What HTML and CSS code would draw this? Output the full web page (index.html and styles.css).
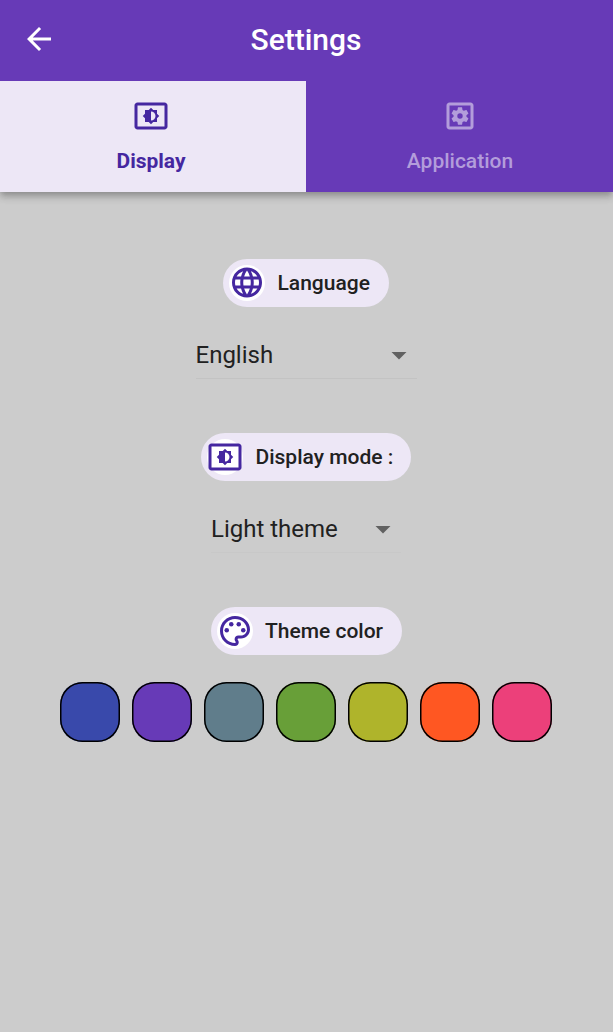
FILE: index.html
```html
<!DOCTYPE html>
<html lang="en">
<head>
<meta charset="utf-8">
<title>Settings</title>
<link rel="stylesheet" href="styles.css">
</head>
<body>
<svg class="defs" aria-hidden="true">
  <symbol id="brightness" viewBox="0 0 24 24"><path d="M21 3H3c-1.1 0-2 .9-2 2v14c0 1.1.9 2 2 2h18c1.1 0 2-.9 2-2V5c0-1.1-.9-2-2-2zm0 16.01H3V4.99h18v14.02zM8 16h2.5l1.5 1.5 1.5-1.5H16v-2.5l1.5-1.5-1.5-1.5V8h-2.5L12 6.5 10.5 8H8v2.5L6.5 12 8 13.5V16zm4-7c1.66 0 3 1.34 3 3s-1.34 3-3 3V9z"/></symbol>
</svg>
<header class="header">
  <div class="appbar">
    <button class="back" aria-label="Back"><svg class="icon" viewBox="0 0 24 24"><path d="M20 11H7.83l5.59-5.59L12 4l-8 8 8 8 1.41-1.41L7.83 13H20v-2z"/></svg></button>
    <h1 class="title">Settings</h1>
  </div>
  <nav class="tabs">
    <a class="tab tab-active"><svg class="icon"><use href="#brightness"/></svg><span class="tab-label label-display">Display</span></a>
    <a class="tab"><svg class="icon" viewBox="0 0 24 24"><path d="M19 3H5c-1.11 0-2 .9-2 2v14c0 1.1.89 2 2 2h14c1.11 0 2-.9 2-2V5c0-1.1-.89-2-2-2zm0 16H5V5h14v14z"/><path transform="translate(12 12) scale(.6) translate(-12 -12)" d="M19.14 12.94c.04-.3.06-.61.06-.94 0-.32-.02-.64-.07-.94l2.03-1.58c.18-.14.23-.41.12-.61l-1.92-3.32c-.12-.22-.37-.29-.59-.22l-2.39.96c-.5-.38-1.03-.7-1.62-.94l-.36-2.54c-.04-.24-.24-.41-.48-.41h-3.84c-.24 0-.43.17-.47.41l-.36 2.54c-.59.24-1.13.57-1.62.94l-2.39-.96c-.22-.08-.47 0-.59.22L2.74 8.87c-.12.21-.08.47.12.61l2.03 1.58c-.05.3-.09.63-.09.94s.02.64.07.94l-2.03 1.58c-.18.14-.23.41-.12.61l1.92 3.32c.12.22.37.29.59.22l2.39-.96c.5.38 1.03.7 1.62.94l.36 2.54c.05.24.24.41.48.41h3.84c.24 0 .44-.17.47-.41l.36-2.54c.59-.24 1.13-.56 1.62-.94l2.39.96c.22.08.47 0 .59-.22l1.92-3.32c.12-.22.07-.47-.12-.61l-2.01-1.58zM12 15a3 3 0 1 1 0-6 3 3 0 0 1 0 6z"/></svg><span class="tab-label">Application</span></a>
  </nav>
</header>
<main class="content">
  <section class="group">
    <h2 class="chip chip-language"><span class="avatar"><svg class="icon" viewBox="0 0.33 24 24"><path d="M11.99 2C6.47 2 2 6.48 2 12s4.47 10 9.99 10C17.52 22 22 17.52 22 12S17.52 2 11.99 2zm6.93 6h-2.95c-.32-1.25-.78-2.45-1.38-3.56 1.84.63 3.37 1.91 4.33 3.56zM12 4.04c.83 1.2 1.48 2.53 1.91 3.96h-3.82c.43-1.43 1.08-2.76 1.91-3.96zM4.26 14C4.1 13.36 4 12.69 4 12s.1-1.36.26-2h3.38c-.08.66-.14 1.32-.14 2 0 .68.06 1.34.14 2H4.26zm.82 2h2.95c.32 1.25.78 2.45 1.38 3.56-1.84-.63-3.37-1.9-4.33-3.56zm2.95-8H5.08c.96-1.66 2.49-2.93 4.33-3.56C8.81 5.55 8.35 6.75 8.03 8zM12 19.96c-.83-1.2-1.48-2.53-1.91-3.96h3.82c-.43 1.43-1.08 2.76-1.91 3.96zM14.34 14H9.66c-.09-.66-.16-1.32-.16-2 0-.68.07-1.35.16-2h4.68c.09.65.16 1.32.16 2 0 .68-.07 1.34-.16 2zm.25 5.56c.6-1.11 1.06-2.31 1.38-3.56h2.95c-.96 1.65-2.49 2.93-4.33 3.56zM16.36 14c.08-.66.14-1.32.14-2 0-.68-.06-1.34-.14-2h3.38c.16.64.26 1.31.26 2s-.1 1.36-.26 2h-3.38z"/></svg></span>Language</h2>
    <div class="select select-language">English<svg class="icon arrow" viewBox="0 0 24 24"><path d="M7 10l5 5 5-5z"/></svg></div>
  </section>
  <section class="group">
    <h2 class="chip chip-mode"><span class="avatar"><svg class="icon"><use href="#brightness"/></svg></span>Display mode :</h2>
    <div class="select select-mode">Light theme<svg class="icon arrow" viewBox="0 0 24 24"><path d="M7 10l5 5 5-5z"/></svg></div>
  </section>
  <section class="group">
    <h2 class="chip chip-color"><span class="avatar"><svg class="icon" viewBox="0 0 24 24"><path d="M12 22C6.49 22 2 17.51 2 12S6.49 2 12 2s10 4.04 10 9c0 3.31-2.69 6-6 6h-1.77c-.28 0-.5.22-.5.5 0 .12.05.23.13.33.41.47.64 1.06.64 1.67 0 1.38-1.12 2.5-2.5 2.5zm0-18c-4.41 0-8 3.59-8 8s3.59 8 8 8c.28 0 .5-.22.5-.5 0-.16-.08-.28-.14-.35-.41-.46-.63-1.05-.63-1.65 0-1.38 1.12-2.5 2.5-2.5H16c2.21 0 4-1.79 4-4 0-3.86-3.59-7-8-7z"/><circle cx="6.5" cy="11.5" r="1.5"/><circle cx="9.5" cy="7.5" r="1.5"/><circle cx="14.5" cy="7.5" r="1.5"/><circle cx="17.5" cy="11.5" r="1.5"/></svg></span>Theme color</h2>
    <div class="swatches">
      <span class="swatch indigo"></span><span class="swatch purple"></span><span class="swatch slate"></span><span class="swatch green"></span><span class="swatch lime"></span><span class="swatch orange"></span><span class="swatch pink"></span>
    </div>
  </section>
</main>
</body>
</html>
```
FILE: styles.css
```css
* { box-sizing: border-box; }
body {
  margin: 0;
  height: 1032px;
  overflow: hidden;
  background: #ccc;
  color: #212121;
  font-family: Roboto, sans-serif;
}
.defs { display: none; }
.icon { display: block; flex: none; width: 36px; height: 36px; fill: currentColor; }
.header {
  height: 192px;
  background: #673ab7;
  color: #fff;
  box-shadow: 0 3px 6px -1px rgba(0,0,0,.18), 0 6px 7px rgba(0,0,0,.12), 0 1px 12px rgba(0,0,0,.1);
}
.appbar {
  display: grid;
  grid-template-columns: 78px 1fr 79px;
  align-items: center;
  height: 81px;
}
.back { padding: 0 0 3px 21px; border: 0; background: none; color: inherit; }
.title { margin: 0; text-align: center; font-size: 30px; line-height: 36px; font-weight: 500; padding-bottom: 1px; }
.tabs { display: grid; grid-template-columns: 306px 307px; height: 111px; }
.tab { display: flex; flex-direction: column; align-items: center; padding: 17px 0 0 1px; color: #b39ddb; }
.tab-active { background: #ede7f6; color: #4527a0; padding: 17px 4px 0 0; }
.tab-label { margin-top: 15px; font-size: 21px; line-height: 24px; font-weight: 500; }
.label-display { font-weight: 700; }
.content { display: flex; flex-direction: column; align-items: center; gap: 54px; width: 612px; padding-top: 66.5px; }
.group { display: flex; flex-direction: column; align-items: center; }
.chip {
  display: flex;
  align-items: center;
  gap: 12.5px;
  height: 48px;
  margin: 0;
  padding-left: 6px;
  border-radius: 24px;
  background: #ede7f6;
  font-size: 21px;
  line-height: 30px;
  font-weight: 500;
  white-space: nowrap;
}
.chip-language { width: 166px; }
.chip-mode { width: 210px; }
.chip-color { width: 191px; }
.avatar { width: 36px; height: 36px; border-radius: 50%; background: #fff; color: #4527a0; }
.select {
  display: flex;
  align-items: center;
  justify-content: space-between;
  height: 48px;
  margin-top: 24px;
  padding-top: 2px;
  border-bottom: 1px solid #c3c3c3;
  font-size: 24px;
  line-height: 30px;
}
.select-language { width: 221px; }
.select-mode { width: 190px; border-color: #c8c8c8; }
.arrow { color: #616161; }
.swatches { display: flex; gap: 12px; margin-top: 27px; }
.swatch { width: 60px; height: 60px; border-radius: 22.5px; box-shadow: inset 0 0 0 1.5px #000; }
.indigo { background: #3949ab; }
.purple { background: #673ab7; }
.slate { background: #607d8b; }
.green { background: #689f38; }
.lime { background: #afb42b; }
.orange { background: #ff5722; }
.pink { background: #ec407a; }
```
